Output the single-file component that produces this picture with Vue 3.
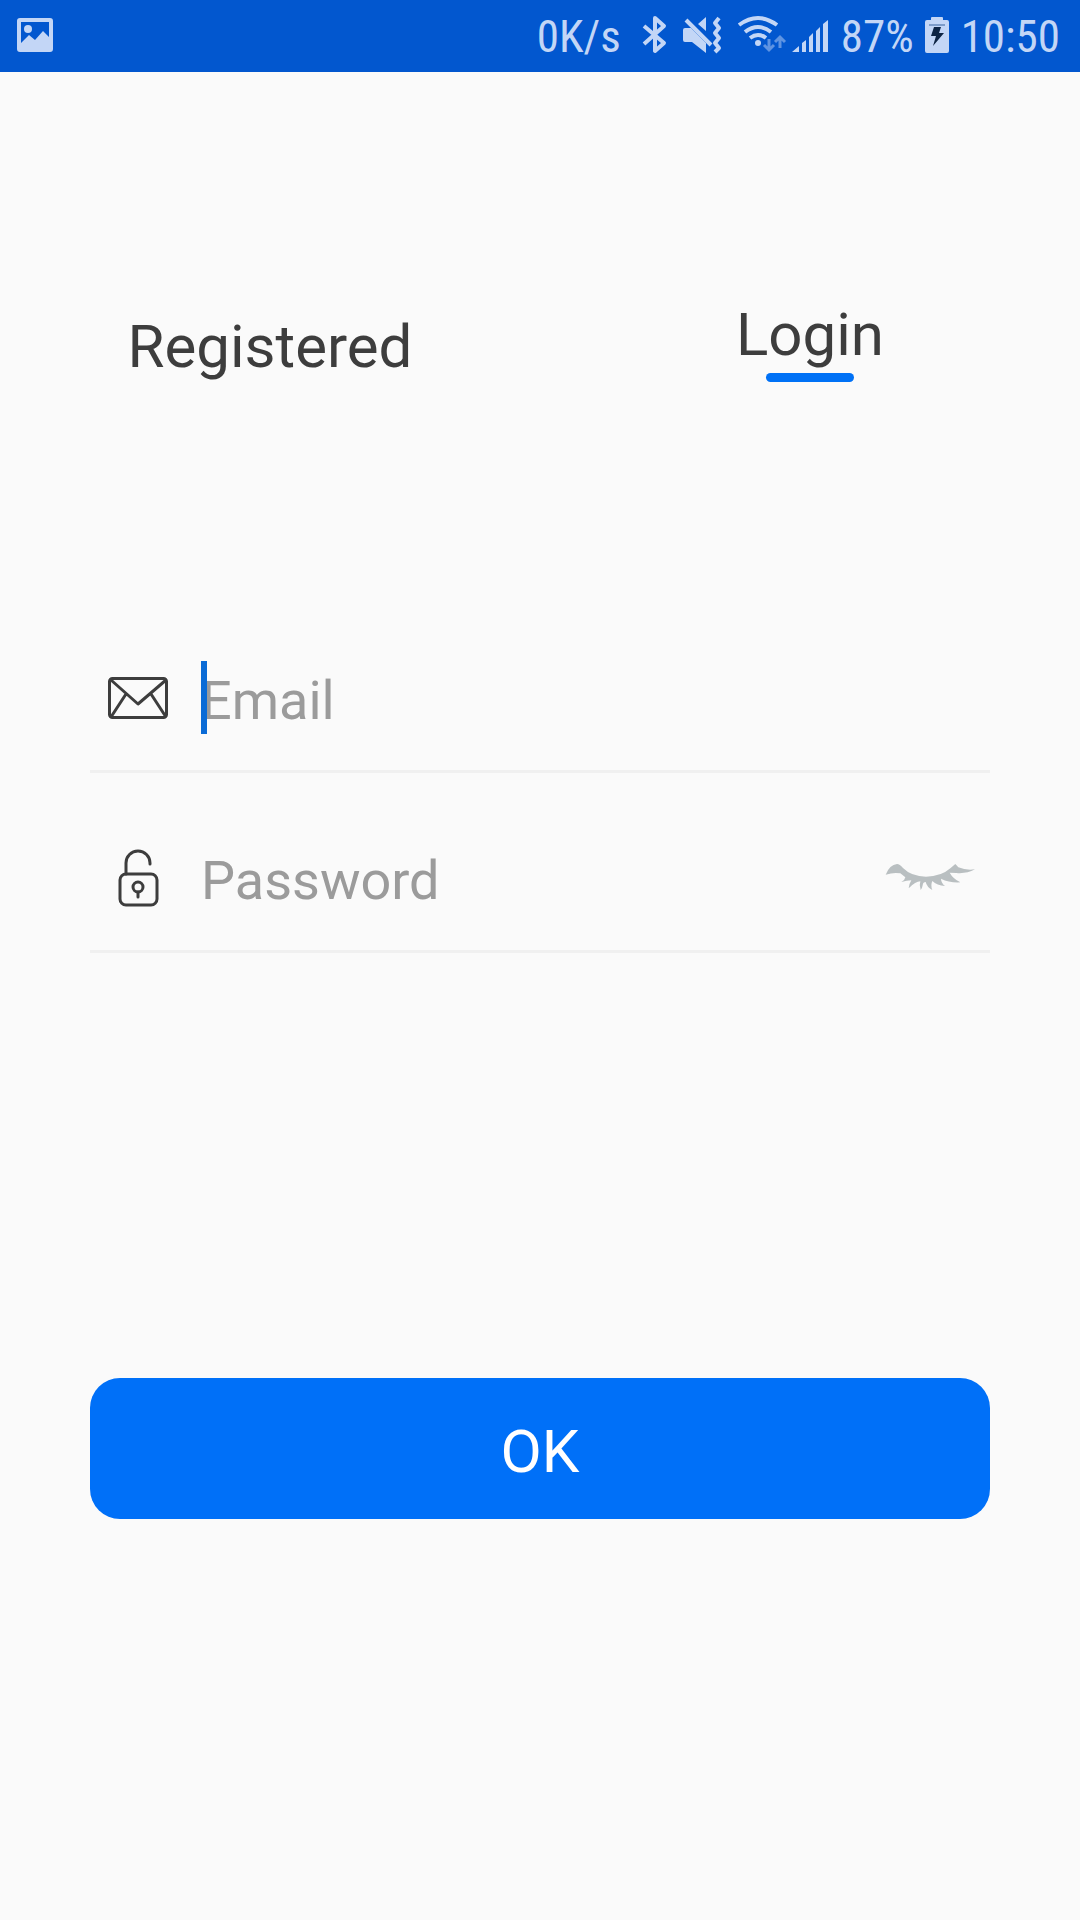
<script setup>
import { ref } from 'vue'

const email = ref('')
const password = ref('')
const passwordVisible = ref(false)
const mode = ref('login')
</script>

<template>
  <div class="screen">
    <header class="status">
      <svg class="picture" width="36" height="40" viewBox="0 0 36 40" aria-hidden="true">
        <rect x="2" y="4" width="32" height="30" rx="1" fill="none" stroke="#c3d6f6" stroke-width="4" />
        <circle cx="11" cy="13" r="4" fill="#c3d6f6" />
        <path d="M3 28 12 19l6 5 8-9 7 7v12H3z" fill="#c3d6f6" />
      </svg>
      <div class="indicators">
        <span class="speed">0K/s</span>
        <svg class="bluetooth" width="24" height="40" viewBox="0 0 24 40" aria-hidden="true">
          <path d="M1 10 21 27 12 35V2l9 8L1 28" fill="none" stroke="#c3d6f6" stroke-width="4" stroke-linejoin="round" />
        </svg>
        <svg class="mute" width="39" height="40" viewBox="0 0 39 40" aria-hidden="true">
          <path d="M15 8 23 1v14zM0 14q0-2 2-2h6l15 15v10L9 26H2q-2 0-2-2z" fill="#c3d6f6" />
          <path d="M3 4 28 29" stroke="#c3d6f6" stroke-width="4" />
          <path d="m36 2-4 5 4 5-4 5 4 5-4 5 4 5-4 4" fill="none" stroke="#c3d6f6" stroke-width="4" stroke-linejoin="round" />
        </svg>
        <svg class="wifi" width="48" height="40" viewBox="0 0 48 40" aria-hidden="true">
          <g fill="none" stroke="#c3d6f6" stroke-width="4">
            <path d="M1 9q19-14 38 0M7 16q13-10 26 0M12 22q8-6 16 0" />
          </g>
          <circle cx="20" cy="27" r="3" fill="#c3d6f6" />
          <path d="M31 23v11m-5-5 5 5 5-5M42 32V21m-5 5 5-5 5 5" fill="none" stroke="#5f94e2" stroke-width="3" />
        </svg>
        <svg class="signal" width="36" height="40" viewBox="0 0 36 40" aria-hidden="true">
          <path d="M0 36l7-6v6zM10 27l4-3v12h-4zM17 21l4-4v19h-4zM24 15l4-4v25h-4zM31 8l5-4v32h-5z" fill="#c3d6f6" />
        </svg>
        <span class="level">87%</span>
        <svg class="battery" width="24" height="40" viewBox="0 0 24 40" aria-hidden="true">
          <path d="M2 4h4V2q0-1 1-1h10q1 0 1 1v2h4q2 0 2 2v29q0 2-2 2H2q-2 0-2-2V6q0-2 2-2z" fill="#c3d6f6" />
          <path d="M4 9h16" stroke="#7d9cc9" stroke-width="2" />
          <path d="M9 11h7l-2 6h5L8 30l3-10H6z" fill="#0d2444" />
        </svg>
        <time class="clock">10:50</time>
      </div>
    </header>

    <main>
      <nav class="tabs">
        <button type="button" class="tab" @click="mode = 'register'">
          Registered
          <span v-if="mode === 'register'" class="marker"></span>
        </button>
        <button type="button" class="tab" @click="mode = 'login'">
          Login
          <span v-if="mode === 'login'" class="marker"></span>
        </button>
      </nav>

      <form @submit.prevent>
        <div class="row">
          <label for="email" aria-label="Email">
            <svg width="60" height="60" viewBox="0 0 60 60" fill="none" stroke="#3d3d3d" stroke-width="3" stroke-linejoin="round" aria-hidden="true">
              <rect x="1.5" y="7.5" width="57" height="39" rx="3" />
              <path d="M3 9 30 33 58 9M18 23 3 46M43 23 58 46" />
            </svg>
          </label>
          <div class="entry">
            <input id="email" v-model="email" type="email" placeholder="Email" />
            <span class="caret"></span>
          </div>
        </div>
        <div class="row">
          <label for="password" aria-label="Password">
            <svg class="lock" width="60" height="60" viewBox="0 1 60 60" fill="none" stroke="#3d3d3d" stroke-width="3" stroke-linecap="round" aria-hidden="true">
              <rect x="12" y="24" width="37" height="31" rx="6" />
              <path d="M18 24V13a12 12 0 0 1 24 0v1M30 42v5" />
              <circle cx="30" cy="37" r="5" />
            </svg>
          </label>
          <div class="entry">
            <input id="password" v-model="password" :type="passwordVisible ? 'text' : 'password'" placeholder="Password" />
          </div>
          <button type="button" class="reveal" aria-label="Show password" @click="passwordVisible = !passwordVisible">
            <svg width="90" height="60" viewBox="75 33 270 180" aria-hidden="true">
              <path d="M74 104Q86 74 108 72Q116 72 126 84Q152 110 195 110Q240 110 268 85L283 72L292 82Q316 92 342 88Q316 102 286 99L266 98Q276 116 298 127Q266 129 240 116Q240 128 252 138Q228 136 214 123Q208 136 214 150Q198 142 194 126Q186 126 185 136Q184 144 179 150Q174 136 178 124Q164 124 143 145Q144 132 151 121Q138 122 121 126Q132 120 133 112L118 100Q98 96 74 104Z" fill="#b9bfc1" />
            </svg>
          </button>
        </div>
        <button type="submit" class="ok">OK</button>
      </form>
    </main>
  </div>
</template>

<style>
body {
  margin: 0;
  background: #fafafa;
}
</style>

<style scoped>
.screen {
  min-height: 100vh;
  background: #fafafa;
  color: #3d3d3d;
  font-family: Roboto, "Liberation Sans", sans-serif;
}

button,
input {
  padding: 0;
  border: 0;
  background: none;
  color: inherit;
  font: inherit;
}

svg {
  display: block;
  overflow: visible;
}

.status {
  display: flex;
  align-items: center;
  justify-content: space-between;
  height: 72px;
  padding: 0 20px 0 17px;
  background: #0257cf;
  color: #c3d6f6;
  font: 45px/72px "Roboto Condensed", Roboto, sans-serif;
}

.indicators {
  display: flex;
  align-items: center;
}

.indicators span,
.indicators time {
  height: 70px;
}

.bluetooth {
  margin-left: 22px;
}

.mute,
.wifi {
  margin-left: 16px;
}

.signal {
  margin-left: 6px;
}

.level {
  margin-left: 13px;
}

.battery {
  margin-left: 11px;
}

.clock {
  margin-left: 12px;
}

.tabs {
  display: flex;
  align-items: flex-end;
  padding-top: 228px;
}

.tab {
  display: flex;
  flex: 1;
  flex-direction: column;
  align-items: center;
  font-size: 60px;
  line-height: 70px;
}

.marker {
  width: 88px;
  height: 9px;
  margin-top: 3px;
  border-radius: 5px;
  background: #0071f6;
}

form {
  padding: 249px 90px 0;
}

.row {
  display: flex;
  align-items: center;
  box-sizing: border-box;
  height: 142px;
  margin-bottom: 38px;
  padding: 0 14px 0 18px;
  border-bottom: 3px solid #f0f0f0;
}

.entry {
  position: relative;
  flex: 1;
  margin-left: 33px;
}

.entry input {
  display: block;
  width: 100%;
  height: 72px;
  outline: 0;
  font-size: 54px;
}

.entry input::placeholder {
  color: #9b9b9b;
  opacity: 1;
}

.caret {
  position: absolute;
  top: -4px;
  left: 0;
  width: 6px;
  height: 73px;
  background: #0a6bd6;
}

.ok {
  display: block;
  width: 100%;
  height: 141px;
  margin-top: 425px;
  padding-top: 5px;
  border-radius: 30px;
  background: #0070f8;
  color: #fff;
  font-size: 60px;
}
</style>
